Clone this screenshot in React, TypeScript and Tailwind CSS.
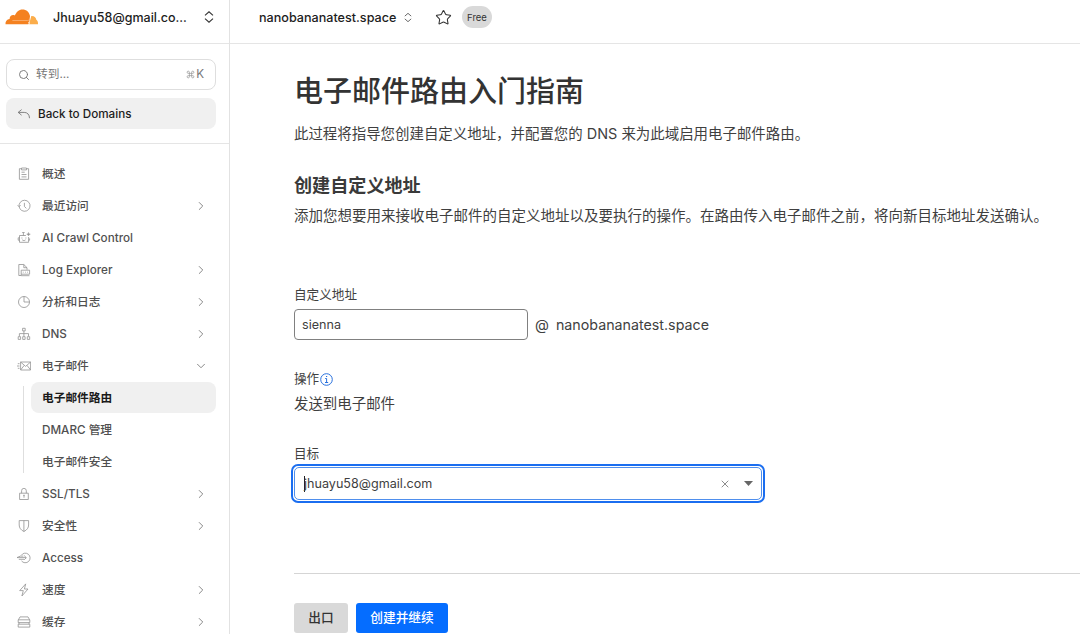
import React from 'react'
import { ChevronDown, ChevronRight, Search, Star, X } from 'lucide-react'

type IconName =
  | 'overview'
  | 'recent'
  | 'crawl'
  | 'log'
  | 'analytics'
  | 'dns'
  | 'email'
  | 'lock'
  | 'shield'
  | 'access'
  | 'bolt'
  | 'cache'

interface NavItem {
  label: string
  icon: IconName
  expandable?: boolean
  children?: string[]
}

const NAV_ITEMS: NavItem[] = [
  { label: '概述', icon: 'overview' },
  { label: '最近访问', icon: 'recent', expandable: true },
  { label: 'AI Crawl Control', icon: 'crawl' },
  { label: 'Log Explorer', icon: 'log', expandable: true },
  { label: '分析和日志', icon: 'analytics', expandable: true },
  { label: 'DNS', icon: 'dns', expandable: true },
  { label: '电子邮件', icon: 'email', children: ['电子邮件路由', 'DMARC 管理', '电子邮件安全'] },
  { label: 'SSL/TLS', icon: 'lock', expandable: true },
  { label: '安全性', icon: 'shield', expandable: true },
  { label: 'Access', icon: 'access' },
  { label: '速度', icon: 'bolt', expandable: true },
  { label: '缓存', icon: 'cache', expandable: true }
]

const ACTIVE_ITEM = '电子邮件路由'

const ICON_SHAPES: Record<IconName, React.ReactNode> = {
  overview: (
    <>
      <path d="M4.5 1.7H2.4v10.6h9.2V1.7h-2" />
      <path d="M4.5 1h5v1.9h-5zM4.5 5.2h3.2M4.5 7.5h5M4.5 9.9h5" />
    </>
  ),
  recent: (
    <>
      <path d="M2.1 7.5A5.5 5.5 0 1 0 3.2 3.4 5.4 5.4 0 0 0 2.1 7.5" />
      <path d="M.6 6.2l1.5 1.5 1.5-1.5M7.4 3.8v3.6l1.9 2" />
    </>
  ),
  crawl: (
    <>
      <path d="M8.9 4.5H2.5v6.8h9.1V6M2.5 6.8H1.2v2.4h1.3M11.6 9.2h1V7.4M6.4 4.5V1.8M5.2 1.5h2.4" />
      <path d="M4.9 6.5v1M8.9 6.5v1M5.2 8.8c.9 1 2.5 1 3.4 0" />
      <path d="M11.5 1.4l.5 1.3 1.3.5-1.3.5-.5 1.3-.5-1.3-1.3-.5 1.3-.5z" fill="currentColor" strokeWidth=".4" />
    </>
  ),
  log: (
    <>
      <path d="M4 12.5H1.8v-11h5l3.2 3.2v2M6.8 1.5v3.2H10" />
      <path d="M4.2 7.2h8.4v4H4.2zM5.8 9.2h.8M8 9.2h.8M10.2 9.2h.8M4.2 11.2v1.5h8.2" />
    </>
  ),
  analytics: (
    <>
      <circle cx="7" cy="7" r="5.5" />
      <path d="M7 1.5V7h5.5" />
    </>
  ),
  dns: (
    <>
      <path d="M5.6 1.3h2.6v2.6H5.6zM6.9 3.9v5.4M2.4 9.3V6.6h9.1v2.7" />
      <path d="M1.2 9.7h2.4v2.7H1.2zM5.7 9.7h2.4v2.7H5.7zM10.3 9.7h2.4v2.7h-2.4z" />
    </>
  ),
  email: (
    <>
      <path d="M3.6 3h10v8h-10zM3.6 3l5 4.4 5-4.4M3.6 11l3.6-4.6M13.6 11L10 6.4" />
      <path d="M.8 4.7h1.7M0 7h2.5M.8 9.3h1.7" />
    </>
  ),
  lock: (
    <>
      <path d="M2.6 6.2h8.7v6.3H2.6zM4.6 6.2V3.7a2.3 2.3 0 0 1 4.7 0v2.5" />
      <path d="M6.1 8.3h1.7M7 8.3v2.4" />
    </>
  ),
  shield: <path d="M2.2 1.6h9.4v4.4c0 2.8-1.6 5-4.7 6.5-3.1-1.5-4.7-3.7-4.7-6.5zM6.9 1.6v10.9" />,
  access: (
    <>
      <path d="M4.3 4.3a4.8 4.8 0 1 1 .2 5.6M0 6.6h9.2M0 6.6l3.4-1.5h3M1.8 8.3H7" />
      <path d="M7.1 4.5l2.2 2.2-2.2 2.2" />
    </>
  ),
  bolt: <path d="M8.7.9L2.7 7.6h3.6L4.9 13l6.1-7H7.4z" />,
  cache: (
    <>
      <path d="M1.4 4.8L3 1.9h8l1.6 2.9M1.2 4.8h11.6v2.8H1.2zM1.2 9.2h11.6v2.9H1.2zM2 7.6v1.6M12 7.6v1.6" />
    </>
  )
}

const NavIcon: React.FC<{ name: IconName }> = ({ name }) => (
  <svg
    className="h-3.5 w-3.5 shrink-0 text-[#929292]"
    viewBox="0 0 14 14"
    fill="none"
    stroke="currentColor"
    strokeWidth="0.8"
    strokeLinejoin="round"
  >
    {ICON_SHAPES[name]}
  </svg>
)

const CloudLogo = () => (
  <svg className="h-4 w-[34px] shrink-0" viewBox="0 0 34 16">
    <path
      d="M23.6 15.3H.5C.2 12.7 1.9 10.4 4.6 10.1 4.6 7 7.4 5.2 9.9 6.6 11.2 2.8 14 .4 17.4.4c4 0 7 2.7 7.6 6.5l-.5 4.7z"
      fill="#f48120"
    />
    <path d="M26.3 6.9c3.2-.2 4.9 1.7 5 3.9 1.3.6 1.9 2.3 1.7 4.5h-8.9l.9-3.6z" fill="#fbad4b" />
    <path d="M7.4 11.5h15.2c1.2 0 1.8-.6 2.2-1.9" fill="none" stroke="#fbc595" strokeWidth=".6" />
    <path d="M23.8 15.6c.6-1.3.4-2.2-.8-2.4" fill="none" stroke="#fff" strokeWidth=".7" />
  </svg>
)

const SelectorArrows: React.FC<{ className: string }> = ({ className }) => (
  <svg className={className} viewBox="0 0 10 12" fill="none" stroke="currentColor" strokeWidth="1.1">
    <path d="M1 4.3L5 .8l4 3.5M1 7.7l4 3.5 4-3.5" />
  </svg>
)

const Sidebar = () => (
  <aside className="flex w-[230px] shrink-0 flex-col border-r border-[#e2e2e2]">
    <div className="flex h-11 shrink-0 items-center border-b border-[#e5e5e5] pb-[9px] pl-[5px]">
      <CloudLogo />
      <span className="ml-3.5 w-[142px] whitespace-nowrap pt-[3px] text-[12.5px] font-medium text-[#1d1d1d]">
        Jhuayu58@gmail.co...
      </span>
      <SelectorArrows className="mb-px ml-[9px] h-3 w-2.5 text-[#333]" />
    </div>

    <div className="flex h-[100px] shrink-0 flex-col gap-2 border-b border-[#e5e5e5] pl-1.5 pr-[13px] pt-[15px]">
      <div className="flex h-[31px] items-center rounded-lg border border-[#dedede] pl-[11px] pr-[11px] text-[11.7px] text-[#777]">
        <Search className="h-3 w-3" strokeWidth={1.9} />
        <span className="ml-1.5 pt-px">转到...</span>
        <span className="ml-auto flex items-center gap-px text-[11.7px]">
          <svg className="h-[9px] w-[9px] text-[#999]" viewBox="0 0 24 24" fill="none" stroke="currentColor" strokeWidth="2">
            <path d="M15 6v12a3 3 0 1 0 3-3H6a3 3 0 1 0 3 3V6a3 3 0 1 0-3 3h12a3 3 0 1 0-3-3" />
          </svg>
          K
        </span>
      </div>
      <div className="flex h-[31px] items-center rounded-lg bg-[#f0f0f0] pl-[11px] text-[11.7px] font-medium text-[#1d1d1d]">
        <svg className="h-3.5 w-3.5 text-[#777]" viewBox="0 0 14 14" fill="none" stroke="currentColor" strokeWidth="0.9">
          <path d="M4.6 2.6L1.2 5.4l3.4 2.8M1.2 5.4h6c3.1 0 5.2 2 5.3 5.8" />
        </svg>
        <span className="ml-[7px] pt-0.5">Back to Domains</span>
      </div>
    </div>

    <nav className="flex flex-col pl-[17px] pr-[13px] pt-3.5 text-[11.7px] font-medium text-[#505050]">
      {NAV_ITEMS.map((item) => (
        <React.Fragment key={item.label}>
          <div className="flex h-8 items-center">
            <NavIcon name={item.icon} />
            <span className="ml-[11px] whitespace-nowrap pt-0.5">{item.label}</span>
            {item.expandable && <ChevronRight className="ml-auto mr-2 h-3.5 w-3.5 text-[#888]" strokeWidth={1.7} />}
            {item.children && <ChevronDown className="ml-auto mr-2 h-3.5 w-3.5 text-[#888]" strokeWidth={1.7} />}
          </div>
          {item.children && (
            <div className="flex pl-1.5">
              <div className="mb-[5px] mt-1 w-px bg-[#dedede]" />
              <div className="ml-[7px] flex-1">
                {item.children.map((child) => (
                  <div key={child} className="h-8">
                    <div
                      className={`flex h-[31px] items-center rounded-lg pl-[11px] pt-[3px] ${
                        child === ACTIVE_ITEM ? 'bg-[#f0f0f0] font-semibold text-[#1a1a1a]' : ''
                      }`}
                    >
                      {child}
                    </div>
                  </div>
                ))}
              </div>
            </div>
          )}
        </React.Fragment>
      ))}
    </nav>
  </aside>
)

const TopBar = () => (
  <header className="flex h-11 shrink-0 items-center border-b border-[#e5e5e5] pb-[9px] pl-[29px]">
    <span className="w-[138px] whitespace-nowrap pt-[3px] text-[12.6px] font-medium text-[#1d1d1d]">
      nanobananatest.space
    </span>
    <SelectorArrows className="ml-[7px] h-[11px] w-2 text-[#555]" />
    <Star className="ml-[23px] h-[17px] w-[17px] text-[#333]" strokeWidth={1.5} strokeLinejoin="miter" />
    <span className="ml-2.5 flex h-[22px] w-[30px] items-center justify-center rounded-full bg-[#d9d9d9] pt-0.5 text-[9.5px] text-[#333]">
      Free
    </span>
  </header>
)

const AddressForm = () => (
  <section className="flex flex-col">
    <label className="mt-[57px] h-5 text-[12.6px] leading-5">自定义地址</label>
    <div className="mt-1 flex h-[31px] items-center">
      <div className="flex h-[31px] w-[234px] items-center rounded-[4px] border border-[#808080] pl-[7px] pt-0.5 text-[12.6px]">
        sienna
      </div>
      <span className="ml-[7px] text-[14.4px]">@</span>
      <span className="ml-[7px] text-[14.25px]">nanobananatest.space</span>
    </div>

    <div className="mt-[29px] flex h-5 items-center text-[12.6px] leading-5">
      操作
      <svg className="ml-px h-[13px] w-[13px] text-[#2870dd]" viewBox="0 0 13 13" fill="none" stroke="currentColor">
        <circle cx="6.5" cy="6.5" r="5.8" />
        <path d="M5.2 5.5h1.4v4M5 9.5h3.2M6 3.5h1.2" />
      </svg>
    </div>
    <p className="mt-[3px] h-6 text-[14.45px] leading-6">发送到电子邮件</p>

    <label className="mt-7 h-5 text-[12.6px] leading-5">目标</label>
    <div className="-ml-[3px] h-[39px] w-[474px] rounded-[7px] border-2 border-[#1b6ef0] p-px">
      <div className="flex h-full items-center rounded-[5px] border border-[#4f8fed] pl-[9px] pr-2 text-[12.6px]">
        <span className="h-4 w-px bg-[#222]" />
        <span className="-ml-px pt-0.5">jhuayu58@gmail.com</span>
        <X className="ml-auto h-3 w-3 text-[#777]" strokeWidth={1.7} />
        <svg className="ml-[13px] h-[5px] w-[9px]" viewBox="0 0 9 5">
          <path d="M0 0h9L4.5 5z" fill="#666" />
        </svg>
      </div>
    </div>
  </section>
)

export default function App() {
  return (
    <div className="flex h-[634px] w-[1080px] overflow-hidden bg-white font-['Inter','Noto_Sans_CJK_SC',sans-serif]">
      <Sidebar />
      <div className="flex min-w-0 flex-1 flex-col">
        <TopBar />
        <main className="flex flex-col whitespace-nowrap pl-16 text-[#3f3f3f]">
          <h1 className="mt-7 h-10 text-[29px] font-medium leading-10 text-[#333]">电子邮件路由入门指南</h1>
          <p className="mt-[10px] h-6 text-[14.45px] leading-6">
            此过程将指导您创建自定义地址，并配置您的 DNS 来为此域启用电子邮件路由。
          </p>
          <h2 className="mt-[25px] h-7 text-[18.1px] font-semibold leading-7 text-[#3a3a3a]">创建自定义地址</h2>
          <p className="mt-[5px] h-6 text-[14.5px] leading-6">
            添加您想要用来接收电子邮件的自定义地址以及要执行的操作。在路由传入电子邮件之前，将向新目标地址发送确认。
          </p>
          <AddressForm />
          <div className="mt-[70px] flex gap-2 border-t border-[#d5d5d5] pt-[29px] text-[12.7px] font-medium">
            <button className="h-[30px] w-[54px] rounded-[3px] bg-[#d9d9d9] text-[#333]">出口</button>
            <button className="h-[30px] w-[92px] rounded-[3px] bg-[#056dff] text-white">创建并继续</button>
          </div>
        </main>
      </div>
    </div>
  )
}
